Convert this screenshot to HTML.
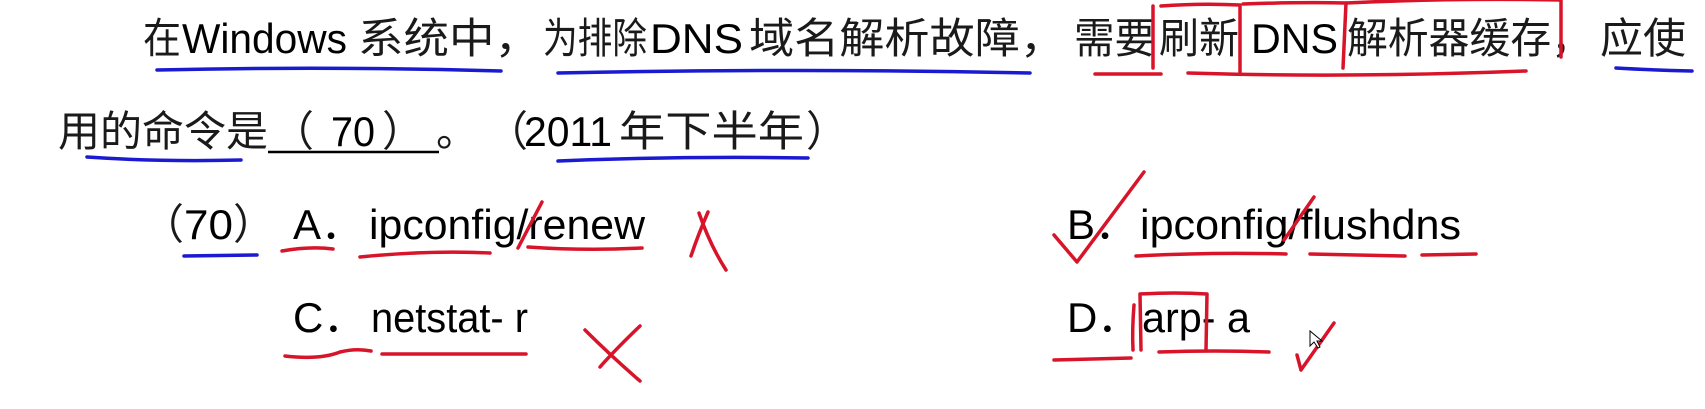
<!DOCTYPE html>
<html><head><meta charset="utf-8"><style>
html,body{margin:0;padding:0;background:#fff;width:1705px;height:409px;overflow:hidden}
svg{display:block}
text{font-family:"Liberation Sans","Noto Sans CJK SC",sans-serif;font-size:42px;fill:#000}
.c{fill:#1a1a1a}
.r{stroke:#d8142a;stroke-width:3.5;fill:none;stroke-linecap:round;stroke-linejoin:round}
.b{stroke:#1a1ad0;stroke-width:3.5;fill:none;stroke-linecap:round}
</style></head><body>
<svg width="1705" height="409" viewBox="0 0 1705 409">
<!-- line 1 -->
<text class="c" x="143" y="53" textLength="38" lengthAdjust="spacingAndGlyphs">在</text>
<text x="182" y="53" textLength="165" lengthAdjust="spacingAndGlyphs">Windows</text>
<text class="c" x="358" y="53" textLength="182" lengthAdjust="spacingAndGlyphs">系统中，</text>
<text class="c" x="543" y="53" textLength="104" lengthAdjust="spacingAndGlyphs">为排除</text>
<text x="650" y="53" textLength="93" lengthAdjust="spacingAndGlyphs">DNS</text>
<text class="c" x="749" y="53" textLength="316" lengthAdjust="spacingAndGlyphs">域名解析故障，</text>
<text class="c" x="1074" y="53" textLength="81" lengthAdjust="spacingAndGlyphs">需要</text>
<text class="c" x="1159" y="53" textLength="80" lengthAdjust="spacingAndGlyphs">刷新</text>
<text x="1251" y="53" textLength="87" lengthAdjust="spacingAndGlyphs">DNS</text>
<text class="c" x="1347" y="53" textLength="245" lengthAdjust="spacingAndGlyphs">解析器缓存，</text>
<text class="c" x="1600" y="53" textLength="86" lengthAdjust="spacingAndGlyphs">应使</text>
<!-- line 2 -->
<text class="c" x="58" y="146" textLength="210" lengthAdjust="spacingAndGlyphs">用的命令是</text>
<text class="c" x="272" y="146">（</text>
<text x="331" y="146" textLength="44" lengthAdjust="spacingAndGlyphs">70</text>
<text class="c" x="382" y="146">）</text>
<text class="c" x="436" y="146">。</text>
<text class="c" x="486" y="146">（</text>
<text x="524" y="146" textLength="88" lengthAdjust="spacingAndGlyphs">2011</text>
<text class="c" x="619" y="146" textLength="185" lengthAdjust="spacingAndGlyphs">年下半年</text>
<text class="c" x="806" y="146">）</text>
<line x1="268" y1="152" x2="439" y2="152" stroke="#000" stroke-width="2.5"/>
<!-- options -->
<text class="c" x="142" y="239">（</text>
<text x="184" y="239" textLength="49" lengthAdjust="spacingAndGlyphs">70</text>
<text class="c" x="233" y="239">）</text>
<text x="293" y="239">A．</text>
<text x="369" y="239" textLength="276" lengthAdjust="spacingAndGlyphs">ipconfig/renew</text>
<text x="1067" y="239">B．</text>
<text x="1140" y="239" textLength="321" lengthAdjust="spacingAndGlyphs">ipconfig/flushdns</text>
<text x="293" y="332">C．</text>
<text x="371" y="332" textLength="157" lengthAdjust="spacingAndGlyphs">netstat- r</text>
<text x="1067" y="332">D．</text>
<text x="1142" y="332" textLength="108" lengthAdjust="spacingAndGlyphs">arp- a</text>
<!-- blue underlines -->
<path class="b" d="M157 70 Q330 66 501 71"/>
<path class="b" d="M558 73 Q800 68 1030 73"/>
<path class="b" d="M1616 68 Q1650 70 1692 71"/>
<path class="b" d="M87 157 Q160 162 241 160"/>
<path class="b" d="M558 161 Q680 156 808 158"/>
<path class="b" d="M184 256 L257 255"/>
<!-- red marks line 1 -->
<path class="r" d="M1095 74 L1161 74"/>
<path class="r" d="M1153 6 L1153 68"/>
<path class="r" d="M1161 6 Q1200 3 1240 5 L1240 72"/>
<path class="r" d="M1243 4 Q1300 2 1346 3 L1343 68"/>
<path class="r" d="M1346 3 Q1450 -2 1561 0 L1561 57"/>
<path class="r" d="M1188 73 Q1350 78 1526 71"/>
<!-- red marks options -->
<path class="r" d="M282 251 Q310 246 333 249"/>
<path class="r" d="M360 257 Q430 250 490 253"/>
<path class="r" d="M528 247 Q585 251 642 248"/>
<path class="r" d="M542 202 L518 248"/>
<path class="r" d="M699 213 Q710 245 726 270 M708 212 Q698 235 691 256"/>
<path class="r" d="M1054 235 L1077 262 L1144 172"/>
<path class="r" d="M1314 197 L1284 240"/>
<path class="r" d="M1136 256 Q1210 252 1286 254"/>
<path class="r" d="M1310 254 L1405 256"/>
<path class="r" d="M1422 255 L1476 254"/>
<path class="r" d="M285 356 Q320 360 340 352 Q356 348 371 351"/>
<path class="r" d="M382 354 L526 354"/>
<path class="r" d="M640 326 Q615 350 600 367 M585 330 Q610 355 640 381"/>
<path class="r" d="M1054 360 L1131 358"/>
<path class="r" d="M1134 305 Q1132 330 1133 350"/>
<path class="r" d="M1141 350 L1140 294 Q1175 292 1207 294 L1206 350"/>
<path class="r" d="M1159 352 Q1215 350 1269 352"/>
<path class="r" d="M1301 370 L1297 355 M1301 370 L1334 323"/>
<path d="M1310 331 L1310 346 L1314 342 L1318 348 L1320 347 L1317 341 L1322 341 Z" fill="#fff" stroke="#000" stroke-width="1"/>
</svg>
</body></html>
